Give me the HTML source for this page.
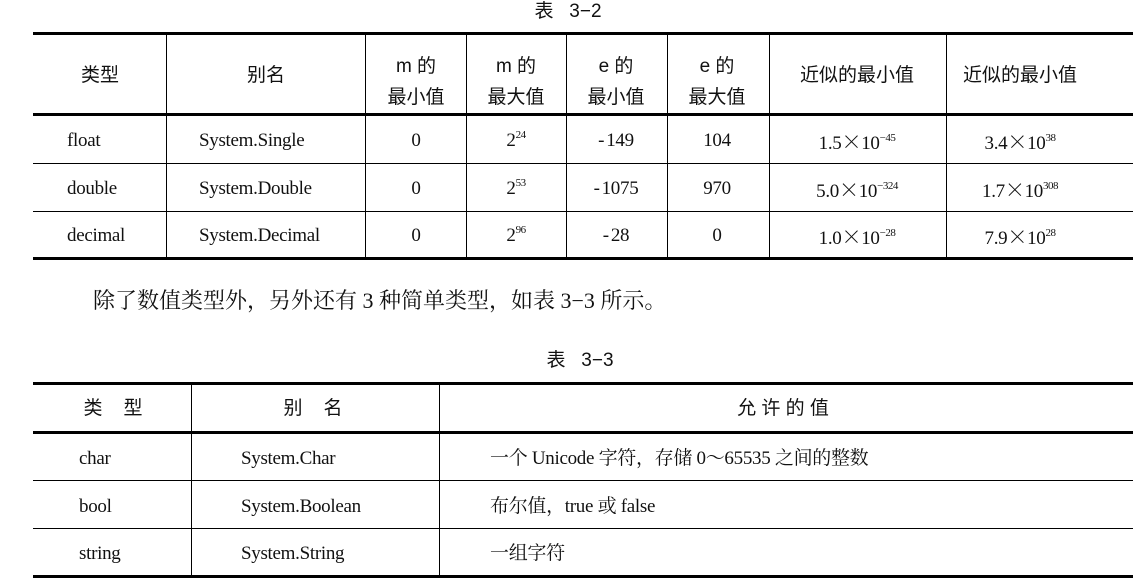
<!DOCTYPE html><html><head><meta charset="utf-8"><style>
body{margin:0;width:1137px;height:588px;background:#fff;position:relative;overflow:hidden;font-family:"Liberation Serif","Noto Serif CJK SC",serif;color:#111}
.h{position:absolute;background:#000;height:1px}
.v{position:absolute;background:#000;width:1px}
.t{position:absolute;white-space:nowrap;font-size:19px;line-height:22px;letter-spacing:-0.3px}
.c{transform:translateX(-50%)}
.s{font-family:"Liberation Sans","Noto Sans CJK SC",sans-serif;font-size:19px;letter-spacing:0;font-weight:400;line-height:20px}
sup{font-size:11px;vertical-align:0;position:relative;top:-8px;letter-spacing:-0.5px}
.x{font-family:"Noto Sans CJK SC",sans-serif;font-weight:300;font-size:20px}
.m{margin-right:2px}
</style></head><body>
<div class="t s c" style="left:568px;top:2px">表&nbsp;&nbsp;&nbsp;3−2</div>
<div class="h" style="left:33px;width:1100px;top:32px;height:3px"></div>
<div class="h" style="left:33px;width:1100px;top:113px;height:3px"></div>
<div class="h" style="left:33px;width:1100px;top:163px"></div>
<div class="h" style="left:33px;width:1100px;top:211px"></div>
<div class="h" style="left:33px;width:1100px;top:257px;height:3px"></div>
<div class="v" style="left:166px;top:35px;height:223px"></div>
<div class="v" style="left:365px;top:35px;height:223px"></div>
<div class="v" style="left:466px;top:35px;height:223px"></div>
<div class="v" style="left:566px;top:35px;height:223px"></div>
<div class="v" style="left:667px;top:35px;height:223px"></div>
<div class="v" style="left:769px;top:35px;height:223px"></div>
<div class="v" style="left:946px;top:35px;height:223px"></div>
<div class="t s c" style="left:100px;top:66px">类型</div>
<div class="t s c" style="left:266px;top:66px">别名</div>
<div class="t s c" style="left:416px;top:51px;text-align:center;line-height:31px">m 的<br>最小值</div>
<div class="t s c" style="left:516px;top:51px;text-align:center;line-height:31px">m 的<br>最大值</div>
<div class="t s c" style="left:616px;top:51px;text-align:center;line-height:31px">e 的<br>最小值</div>
<div class="t s c" style="left:717px;top:51px;text-align:center;line-height:31px">e 的<br>最大值</div>
<div class="t s c" style="left:857px;top:66px">近似的最小值</div>
<div class="t s c" style="left:1020px;top:66px">近似的最小值</div>

<div class="t" style="left:67px;top:130px">float</div>
<div class="t" style="left:67px;top:178px">double</div>
<div class="t" style="left:67px;top:225px">decimal</div>
<div class="t" style="left:199px;top:130px">System.Single</div>
<div class="t" style="left:199px;top:178px">System.Double</div>
<div class="t" style="left:199px;top:225px">System.Decimal</div>
<div class="t c" style="left:416px;top:130px">0</div>
<div class="t c" style="left:416px;top:178px">0</div>
<div class="t c" style="left:416px;top:225px">0</div>
<div class="t c" style="left:516px;top:130px">2<sup>24</sup></div>
<div class="t c" style="left:516px;top:178px">2<sup>53</sup></div>
<div class="t c" style="left:516px;top:225px">2<sup>96</sup></div>
<div class="t c" style="left:616px;top:130px"><span class="m">-</span>149</div>
<div class="t c" style="left:616px;top:178px"><span class="m">-</span>1075</div>
<div class="t c" style="left:616px;top:225px"><span class="m">-</span>28</div>
<div class="t c" style="left:717px;top:130px">104</div>
<div class="t c" style="left:717px;top:178px">970</div>
<div class="t c" style="left:717px;top:225px">0</div>
<div class="t c" style="left:857px;top:130px">1.5<span class="x">×</span>10<sup>−45</sup></div>
<div class="t c" style="left:857px;top:178px">5.0<span class="x">×</span>10<sup>−324</sup></div>
<div class="t c" style="left:857px;top:225px">1.0<span class="x">×</span>10<sup>−28</sup></div>
<div class="t c" style="left:1020px;top:130px">3.4<span class="x">×</span>10<sup>38</sup></div>
<div class="t c" style="left:1020px;top:178px">1.7<span class="x">×</span>10<sup>308</sup></div>
<div class="t c" style="left:1020px;top:225px">7.9<span class="x">×</span>10<sup>28</sup></div>

<div class="t" style="left:93px;top:288px;font-size:22px;line-height:26px;letter-spacing:0">除了数值类型外，另外还有 3 种简单类型，如表 3−3 所示。</div>

<div class="t s c" style="left:580px;top:351px">表&nbsp;&nbsp;&nbsp;3−3</div>
<div class="h" style="left:33px;width:1100px;top:382px;height:3px"></div>
<div class="h" style="left:33px;width:1100px;top:431px;height:3px"></div>
<div class="h" style="left:33px;width:1100px;top:480px"></div>
<div class="h" style="left:33px;width:1100px;top:528px"></div>
<div class="h" style="left:33px;width:1100px;top:575px;height:3px"></div>
<div class="v" style="left:191px;top:385px;height:191px"></div>
<div class="v" style="left:439px;top:385px;height:191px"></div>
<div class="t s c" style="left:113px;top:399px">类&nbsp;&nbsp;&nbsp;&nbsp;型</div>
<div class="t s c" style="left:313px;top:399px">别&nbsp;&nbsp;&nbsp;&nbsp;名</div>
<div class="t s c" style="left:783px;top:399px">允 许 的 值</div>
<div class="t" style="left:79px;top:448px">char</div>
<div class="t" style="left:79px;top:496px">bool</div>
<div class="t" style="left:79px;top:543px">string</div>
<div class="t" style="left:241px;top:448px">System.Char</div>
<div class="t" style="left:241px;top:496px">System.Boolean</div>
<div class="t" style="left:241px;top:543px">System.String</div>
<div class="t" style="left:490px;top:448px">一个 Unicode 字符，存储 0～65535 之间的整数</div>
<div class="t" style="left:490px;top:496px">布尔值，true 或 false</div>
<div class="t" style="left:490px;top:543px">一组字符</div>
</body></html>
